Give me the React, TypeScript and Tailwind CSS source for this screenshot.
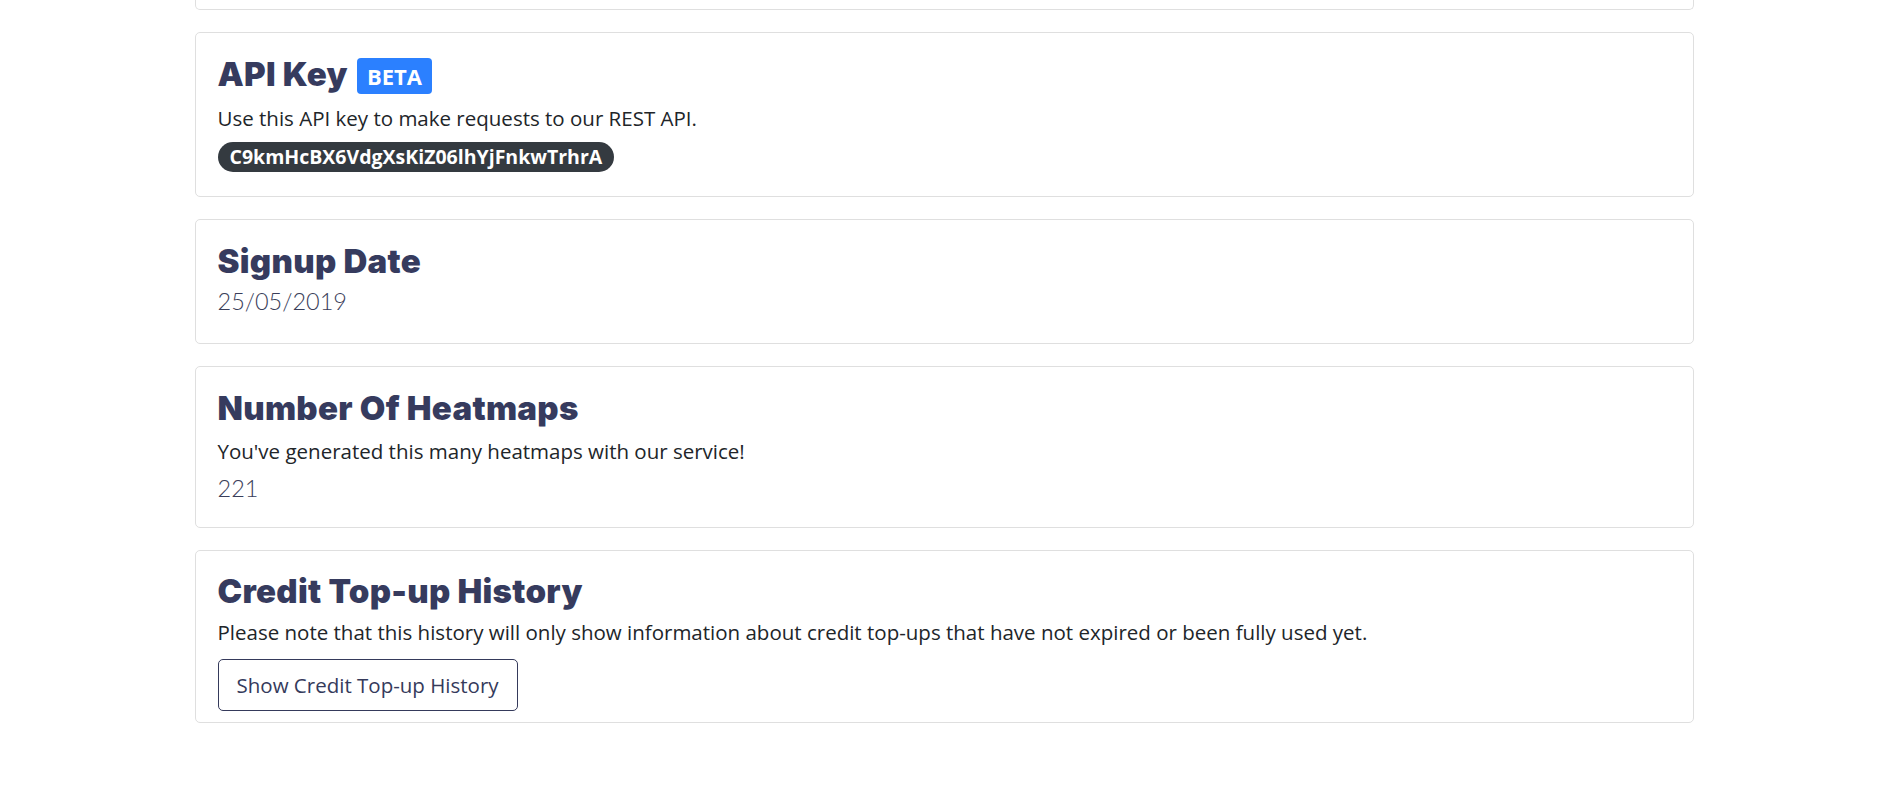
const body = "font-['Open_Sans',_'Liberation_Sans',_sans-serif]";
const light = "font-['Lato',_'Liberation_Sans',_sans-serif] font-light text-[23.5px] leading-[30px] text-[#3a3e5a]";
const heading = "font-['Inter',_'Liberation_Sans',_sans-serif] font-black text-[33px] leading-[40px] text-[#363b5e] tracking-[0.3px]";
const text = "text-[20.5px] leading-[30px] text-[#212529]";

const Card = ({ className = '', children }: { className?: string; children: React.ReactNode }) => (
    <div className={`bg-white border border-[#dfdfdf] rounded-[5px] px-[22px] ${className}`}>{children}</div>
);

const App = () => {
    return (
        <div className={`min-h-screen bg-white ${body}`}>
            <div className="w-[1499px] mx-auto flex flex-col gap-[22px]">
                {/* tail of the card above */}
                <div className="h-[10px] border-x border-b border-[#dfdfdf] rounded-b-[5px]" />

                <Card className="pt-[21px] pb-[24px]">
                    <div className="flex items-end h-[40px]">
                        <h3 className={heading}>API Key</h3>
                        <span className="ml-[9px] h-[36px] px-[10px] inline-flex items-center rounded-[4px] bg-[#2b80ff] text-white font-bold text-[22px]">
                            BETA
                        </span>
                    </div>
                    <p className={`mt-[9px] ${text}`}>Use this API key to make requests to our REST API.</p>
                    <div className="mt-[9px]">
                        <span className="inline-flex items-center h-[30px] px-[12px] rounded-full bg-[#343a40] text-white font-bold text-[19.5px]">
                            C9kmHcBX6VdgXsKiZ06lhYjFnkwTrhrA
                        </span>
                    </div>
                </Card>

                <Card className="pt-[21px] pb-[27px]">
                    <h3 className={heading}>Signup Date</h3>
                    <p className={`mt-[5px] ${light}`}>25/05/2019</p>
                </Card>

                <Card className="pt-[21px] pb-[24px]">
                    <h3 className={heading}>Number Of Heatmaps</h3>
                    <p className={`mt-[8px] ${text}`}>You've generated this many heatmaps with our service!</p>
                    <p className={`mt-[7px] ${light}`}>221</p>
                </Card>

                <Card className="pt-[20px] pb-[11px]">
                    <h3 className={heading}>Credit Top-up History</h3>
                    <p className={`mt-[6px] ${text}`}>
                        Please note that this history will only show information about credit top-ups that have not expired or been fully used yet.
                    </p>
                    <button className="mt-[12px] h-[52px] px-[18px] border border-[#353a5b] rounded-[5px] text-[20.5px] text-[#353a5b] bg-white">
                        Show Credit Top-up History
                    </button>
                </Card>
            </div>
        </div>
    );
};

export default App;
